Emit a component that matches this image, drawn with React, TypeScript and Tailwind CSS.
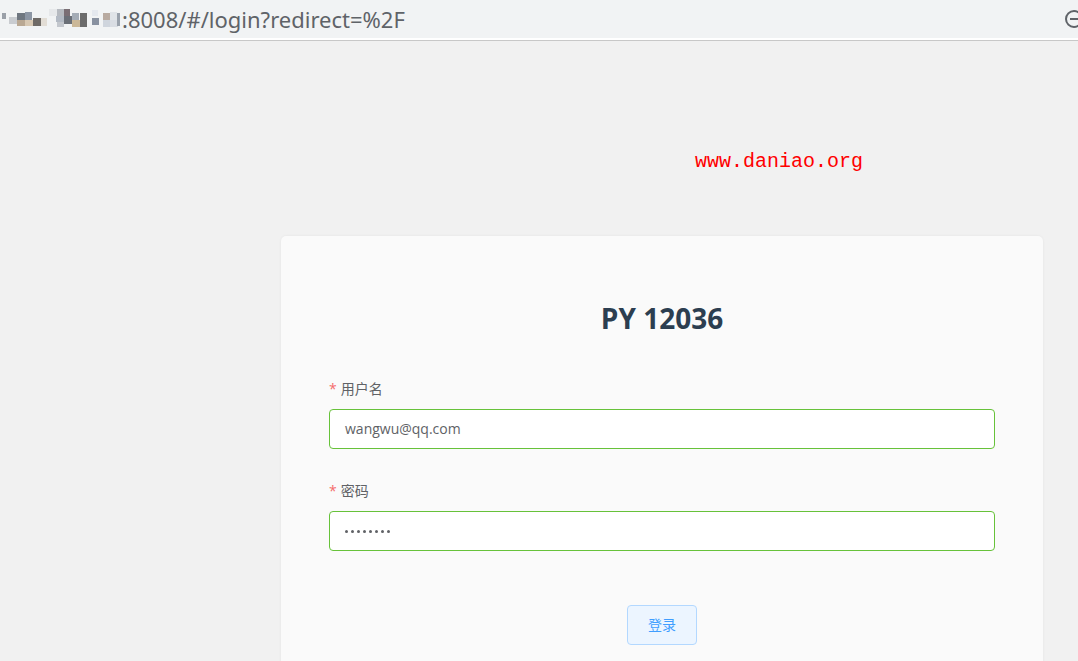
import React from 'react';

// pixelated blur in front of the address (host part hidden)
const mosaic: { x: number; y: number; w: number; h: number; c: string }[] = [
  { x: 2, y: 13, w: 4, h: 6, c: '#9aa0a8' },
  { x: 9, y: 17, w: 8, h: 7, c: '#c9ccd0' },
  { x: 17, y: 13, w: 8, h: 7, c: '#6f7780' },
  { x: 25, y: 12, w: 7, h: 8, c: '#8c96a4' },
  { x: 17, y: 20, w: 8, h: 6, c: '#b9a893' },
  { x: 25, y: 20, w: 8, h: 6, c: '#d7c8b3' },
  { x: 33, y: 18, w: 8, h: 8, c: '#6e6a66' },
  { x: 41, y: 18, w: 6, h: 8, c: '#e2ddd5' },
  { x: 49, y: 9, w: 8, h: 7, c: '#e6e8ea' },
  { x: 57, y: 9, w: 7, h: 7, c: '#b6bac0' },
  { x: 64, y: 9, w: 6, h: 8, c: '#7a6e74' },
  { x: 56, y: 16, w: 8, h: 6, c: '#b3bac4' },
  { x: 64, y: 16, w: 8, h: 8, c: '#6a6f77' },
  { x: 57, y: 22, w: 7, h: 5, c: '#c3c7cd' },
  { x: 72, y: 13, w: 7, h: 7, c: '#a4acb6' },
  { x: 72, y: 20, w: 8, h: 7, c: '#cbb898' },
  { x: 80, y: 13, w: 7, h: 14, c: '#6b6b6b' },
  { x: 92, y: 10, w: 6, h: 6, c: '#e4e8ee' },
  { x: 92, y: 18, w: 7, h: 7, c: '#8891a0' },
  { x: 103, y: 13, w: 7, h: 7, c: '#b8aaa0' },
  { x: 103, y: 20, w: 7, h: 7, c: '#cfd5dd' },
  { x: 110, y: 12, w: 7, h: 8, c: '#e0e4e8' },
  { x: 110, y: 20, w: 8, h: 7, c: '#d9dde3' },
  { x: 117, y: 13, w: 3, h: 13, c: '#9aa2ac' },
];

const FormItem: React.FC<{ label: string; children: React.ReactNode }> = ({ label, children }) => (
  <div className="mb-[22px]">
    <div className="h-10 leading-10 text-sm text-[#606266]">
      <span className="text-[#f56c6c] mr-1">*</span>
      {label}
    </div>
    {children}
  </div>
);

export default function App() {
  return (
    <div
      className="w-[1078px] h-[661px] overflow-hidden bg-[#f1f1f1]"
      style={{ fontFamily: '"Open Sans", "Noto Sans CJK SC", sans-serif' }}
    >
      {/* browser address bar */}
      <div className="h-[38px] bg-[#f1f3f4] flex items-center relative">
        <div className="relative w-[122px] h-[38px]">
          {mosaic.map((m, i) => (
            <span
              key={i}
              className="absolute"
              style={{ left: m.x, top: m.y, width: m.w, height: m.h, background: m.c }}
            />
          ))}
        </div>
        <span className="text-[22px] text-[#5f6368] leading-none" style={{ fontFamily: '"Noto Sans", sans-serif' }}>
          :8008/#/login?redirect=%2F
        </span>
        <svg className="absolute left-[1063px] top-[8px]" width="22" height="22" viewBox="0 0 22 22">
          <circle cx="11" cy="11" r="8" fill="none" stroke="#5f6368" strokeWidth="2" />
          <line x1="7" y1="11" x2="15" y2="11" stroke="#5f6368" strokeWidth="2" />
        </svg>
      </div>
      <div className="h-[2px] bg-white" />
      <div className="h-px bg-[#c8c8c8]" />

      {/* page */}
      <div className="relative">
        <div
          className="absolute left-[695px] top-[111px] text-[20px] leading-none text-[#ff0000]"
          style={{ fontFamily: '"Liberation Mono", monospace' }}
        >
          www.daniao.org
        </div>

        <div className="pt-[195px] pl-[281px]">
          <div className="w-[762px] h-[500px] bg-[#fafafa] rounded-[5px] shadow-[0_0_3px_rgba(0,0,0,0.06)] px-12 pt-[62px]">
            <h3 className="h-10 leading-10 text-center text-[28px] font-bold text-[#2c3e50]">PY 12036</h3>
            <div className="mt-[31px]">
              <FormItem label="用户名">
                <div className="h-10 bg-white border border-[#67c23a] rounded-[4px] px-[15px] flex items-center text-sm text-[#606266]">
                  wangwu@qq.com
                </div>
              </FormItem>
              <FormItem label="密码">
                <div className="h-10 bg-white border border-[#67c23a] rounded-[4px] px-[15px] flex items-center gap-[3px]">
                  {Array.from({ length: 8 }).map((_, i) => (
                    <span key={i} className="w-[3px] h-[3px] rounded-full bg-[#606266]" />
                  ))}
                </div>
              </FormItem>
              <div className="flex justify-center pt-[32px]">
                <button className="w-[70px] h-10 bg-[#ecf5ff] border border-[#b3d8ff] rounded-[4px] text-sm text-[#409eff]">
                  登录
                </button>
              </div>
            </div>
          </div>
        </div>
      </div>
    </div>
  );
}
